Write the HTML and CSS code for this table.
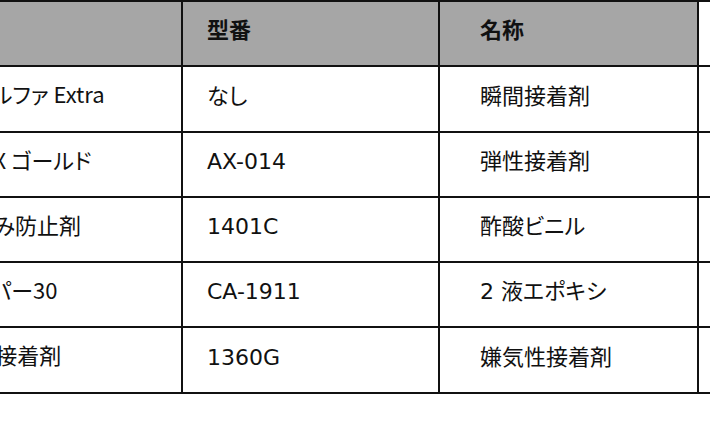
FILE: index.html
```html
<!DOCTYPE html>
<html lang="ja">
<head>
<meta charset="utf-8">
<title>接着剤一覧</title>
<link rel="stylesheet" href="styles.css">
</head>
<body>
<div class="sheet">
  <div class="table">
    <div class="cell head c1">製品名</div>
    <div class="cell head c2">型番</div>
    <div class="cell head c3">名称</div>
    <div class="cell head c4"></div>

    <div class="cell c1">アロンアルファ Extra</div>
    <div class="cell c2">なし</div>
    <div class="cell c3">瞬間接着剤</div>
    <div class="cell c4"></div>

    <div class="cell c1">スーパーX ゴールド</div>
    <div class="cell c2">AX-014</div>
    <div class="cell c3">弾性接着剤</div>
    <div class="cell c4"></div>

    <div class="cell c1">ネジゆるみ防止剤</div>
    <div class="cell c2">1401C</div>
    <div class="cell c3">酢酸ビニル</div>
    <div class="cell c4"></div>

    <div class="cell c1">ハイスーパー30</div>
    <div class="cell c2">CA-1911</div>
    <div class="cell c3">2 液エポキシ</div>
    <div class="cell c4"></div>

    <div class="cell c1">ねじ止め接着剤</div>
    <div class="cell c2">1360G</div>
    <div class="cell c3">嫌気性接着剤</div>
    <div class="cell c4"></div>
  </div>
</div>
</body>
</html>
```

FILE: styles.css
```css
html, body {
  margin: 0;
  padding: 0;
  background: #ffffff;
}

body {
  width: 710px;
  height: 434px;
  overflow: hidden;
  font-family: "DejaVu Sans", "Noto Sans CJK JP", sans-serif;
  font-size: 22px;
  color: #111111;
  font-feature-settings: "palt";
}

.sheet {
  margin-left: -120px;
  width: 900px;
}

.table {
  display: grid;
  grid-template-columns: 299px 255px 257px 1fr;
  grid-template-rows: 63px 64px 63px 63px 63px 64px;
  gap: 2px;
  padding: 2px;
  background: #111111;
}

.cell {
  background: #ffffff;
  display: flex;
  align-items: center;
  padding-bottom: 5px;
  box-sizing: border-box;
  white-space: nowrap;
  overflow: hidden;
  line-height: 1;
}

.head {
  background: #a6a6a6;
  font-weight: bold;
}

.head.c4 {
  background: #ffffff;
}

.c1 {
  padding-left: 28px;
  padding-bottom: 12px;
  font-family: "Noto Sans CJK JP", sans-serif;
}

.c2 {
  padding-left: 24px;
}

.c3 {
  padding-left: 40px;
}
```
